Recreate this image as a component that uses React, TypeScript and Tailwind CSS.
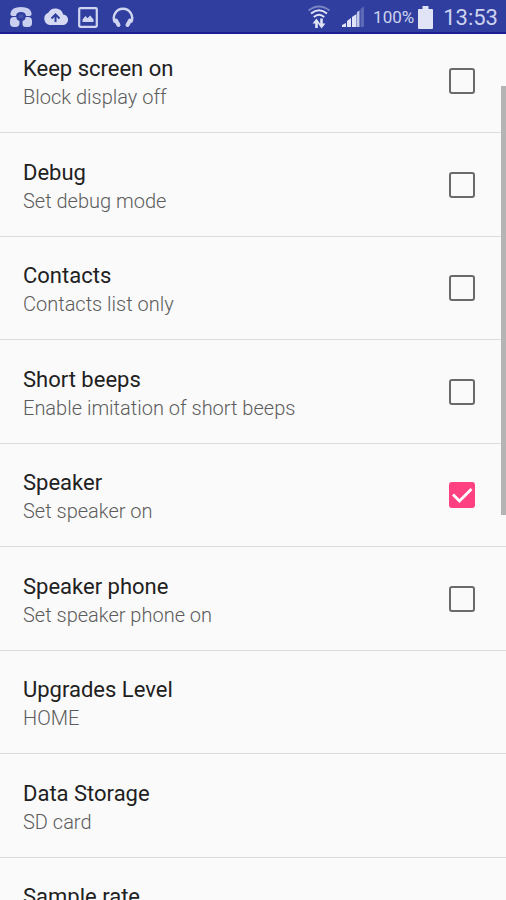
import { useState } from "react";

type Preference = {
  id: string;
  title: string;
  summary?: string;
  checked?: boolean;
};

const preferences: Preference[] = [
  { id: "keep-screen-on", title: "Keep screen on", summary: "Block display off", checked: false },
  { id: "debug", title: "Debug", summary: "Set debug mode", checked: false },
  { id: "contacts", title: "Contacts", summary: "Contacts list only", checked: false },
  { id: "short-beeps", title: "Short beeps", summary: "Enable imitation of short beeps", checked: false },
  { id: "speaker", title: "Speaker", summary: "Set speaker on", checked: true },
  { id: "speaker-phone", title: "Speaker phone", summary: "Set speaker phone on", checked: false },
  { id: "upgrades", title: "Upgrades Level", summary: "HOME" },
  { id: "storage", title: "Data Storage", summary: "SD card" },
  { id: "sample-rate", title: "Sample rate" },
];

function PhoneIcon() {
  return (
    <svg width="24" height="22" viewBox="0 0 24 22" fill="#c9cfee" aria-hidden="true">
      <path d="M1.500 7Q2.500 1 12 1t10.500 6q.5 3-2 3h-3.500L16 7.500q-4-2-8 0L7 10H3.500q-2.500 0-2-3z" />
      <rect x="1" y="11" width="9.500" height="10" rx="4" />
      <rect x="13" y="11" width="10" height="10" rx="4" />
      <path d="M7.500 12V9.500q0-3.500 4.500-3.500t4.500 3.500V12q0 2-3 3v6h-2.500v-6q-3.500-1-3.500-3z" fill="#303f9f" />
      <path d="M9.500 12v-2q0-1.800 2.500-1.800t2.500 1.800v2z" fill="#4655ab" />
    </svg>
  );
}

function CloudIcon() {
  return (
    <svg width="25" height="18" viewBox="0 0 25 18" aria-hidden="true">
      <path d="M20.200 6.600A8 8 0 0 0 5.300 4.800 6.400 6.400 0 0 0 6.400 17H19.500a5.200 5.200 0 0 0 .7-10.400z" fill="#d5daf2" />
      <path d="M8.500 10.500l4-4 4 4M12.500 7v7" fill="none" stroke="#303f9f" strokeWidth="2" />
    </svg>
  );
}

function PictureIcon() {
  return (
    <svg width="20" height="21" viewBox="0 0 20 21" aria-hidden="true">
      <rect x="1.200" y="1.200" width="17.600" height="18.600" rx="1" fill="none" stroke="#d0d6f1" strokeWidth="2.200" />
      <path d="M4.500 15v-2.500l3-3.500 2 2.300 2.700-2.800 3.300 4V15z" fill="#d0d6f1" />
    </svg>
  );
}

function HeadphonesIcon() {
  return (
    <svg width="22" height="21" viewBox="0 0 22 21" fill="none" stroke="#d0d6f1" aria-hidden="true">
      <path d="M3 15.500A9.200 9.200 0 0 1 11 1.800 9.200 9.200 0 0 1 19 15.500" strokeWidth="2.400" />
      <path d="M4 13.500l2.500 4.500M18 13.500L15.500 18" strokeWidth="4" strokeLinecap="round" />
    </svg>
  );
}

function WifiIcon() {
  return (
    <svg width="24" height="24" viewBox="0 0 24 24" fill="none" aria-hidden="true">
      <path d="M1.500 5.500Q12-2.500 22.500 5.500" stroke="#7984c5" strokeWidth="2" />
      <path d="M4 8.500Q12 2 20 8.500" stroke="#e0e4f6" strokeWidth="2" />
      <path d="M6.800 12Q12 7.500 17.200 12" stroke="#e0e4f6" strokeWidth="2" />
      <path d="M9.500 23V16M14.500 13.500V20" stroke="#e0e4f6" strokeWidth="2.600" />
      <path d="M5.500 18.500l4-5 3.500 5zM11 18.500h7.500l-4 5z" fill="#e0e4f6" />
    </svg>
  );
}

function SignalIcon() {
  return (
    <svg width="24" height="22" viewBox="0 0 24 22" aria-hidden="true">
      <path d="M1 21v-2l4-2v4z" fill="#e0e4f6" />
      <path d="M6 21v-6l4-3v9z" fill="#e0e4f6" />
      <path d="M11 21V11l4.500-3v13z" fill="#e0e4f6" />
      <path d="M16 21V6l2.500-1.500V21z" fill="#c3caeb" />
      <path d="M19.500 21V3l3.500-2.500V21z" fill="#5d69b7" />
    </svg>
  );
}

function BatteryIcon() {
  return (
    <svg width="15" height="23" viewBox="0 0 15 23" fill="#e0e4f6" aria-hidden="true">
      <path d="M4.500 0h6v3H14q1 0 1 1v18q0 1-1 1H1q-1 0-1-1V4q0-1 1-1h3.500z" />
    </svg>
  );
}

function StatusBar() {
  return (
    <header className="flex h-[34px] shrink-0 items-center justify-between border-b-2 border-[#1c1c94] bg-[#303f9f] pt-0.5 pr-2 pl-[9px]">
      <div className="flex items-center gap-2.5">
        <PhoneIcon />
        <CloudIcon />
        <PictureIcon />
        <div className="ml-1">
          <HeadphonesIcon />
        </div>
      </div>
      <div className="flex items-center text-[#cdd3ef]">
        <WifiIcon />
        <div className="ml-2.5">
          <SignalIcon />
        </div>
        <span className="ml-2 text-[17px] leading-6">100%</span>
        <div className="ml-1">
          <BatteryIcon />
        </div>
        <time className="ml-2.5 pt-0.5 text-[22px] leading-7">13:53</time>
      </div>
    </header>
  );
}

function Checkbox({ id, defaultChecked }: { id: string; defaultChecked: boolean }) {
  const [checked, setChecked] = useState(defaultChecked);
  return (
    <span className="grid shrink-0 place-items-center">
      <input
        id={id}
        type="checkbox"
        checked={checked}
        onChange={(event) => setChecked(event.target.checked)}
        className="col-start-1 row-start-1 size-[26px] appearance-none rounded-[3px] border-2 border-[#6a6a6a] checked:border-[#ff4081] checked:bg-[#ff4081]"
      />
      {checked && (
        <svg
          width="26"
          height="26"
          viewBox="0 0 26 26"
          fill="none"
          stroke="#fff"
          strokeWidth="2.800"
          className="pointer-events-none col-start-1 row-start-1"
          aria-hidden="true"
        >
          <path d="M4 12.500l6.500 6.500L22.500 7" />
        </svg>
      )}
    </span>
  );
}

function PreferenceRow({ id, title, summary, checked }: Preference) {
  const text = (
    <>
      <span className="block text-[22px] leading-[29px] text-[#212121]">{title}</span>
      {summary && (
        <span className="block text-[20px] leading-[29px] font-light text-[#5c5c5c]">{summary}</span>
      )}
    </>
  );
  return (
    <li className="flex items-center justify-between border-b border-[#dcdcdc] pr-[31px] pl-[23px]">
      {checked === undefined ? (
        <button type="button" className="grow pt-[25px] pb-5 text-left">
          {text}
        </button>
      ) : (
        <>
          <label htmlFor={id} className="grow pt-[25px] pb-5">
            {text}
          </label>
          <Checkbox id={id} defaultChecked={checked} />
        </>
      )}
    </li>
  );
}

export default function App() {
  return (
    <div className="flex h-screen flex-col overflow-hidden bg-[#fafafa] font-['Roboto',sans-serif]">
      <StatusBar />
      <main className="relative min-h-0 grow overflow-hidden">
        <ul className="-mt-[5px] *:even:-mb-px">
          {preferences.map((preference) => (
            <PreferenceRow key={preference.id} {...preference} />
          ))}
        </ul>
        <div className="absolute top-[52px] right-0 h-[429px] w-[5px] bg-[#b4b4b4]" />
      </main>
    </div>
  );
}
